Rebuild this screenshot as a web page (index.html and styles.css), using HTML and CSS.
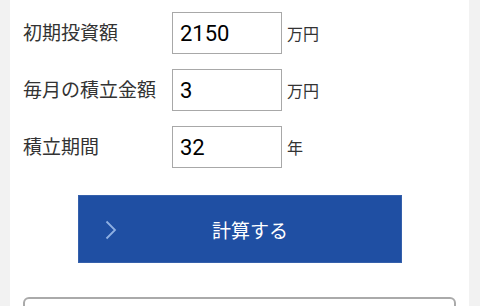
FILE: index.html
```html
<!DOCTYPE html>
<html lang="ja">
<head>
  <meta charset="UTF-8">
  <title>積立シミュレーション</title>
  <meta name="viewport" content="width=device-width, initial-scale=1.0">
  <link rel="stylesheet" href="styles.css">
</head>
<body>
  <div class="panel">
    <div class="form-row">
      <label class="label" for="initial">初期投資額</label>
      <input class="num-input" id="initial" type="text" value="2150">
      <span class="unit">万円</span>
    </div>
    <div class="form-row">
      <label class="label" for="monthly">毎月の積立金額</label>
      <input class="num-input" id="monthly" type="text" value="3">
      <span class="unit">万円</span>
    </div>
    <div class="form-row">
      <label class="label" for="years">積立期間</label>
      <input class="num-input" id="years" type="text" value="32">
      <span class="unit">年</span>
    </div>
    <button class="calc-btn">
      <svg class="chevron" width="12" height="20" viewBox="0 0 12 20">
        <polyline points="1.5,1.5 10,10 1.5,18.5" fill="none" stroke="#8fb0e2" stroke-width="1.8"/>
      </svg>
      計算する
    </button>
    <div class="result-box"></div>
  </div>
</body>
</html>
```

FILE: styles.css
```css
body {
  margin: 0;
  background: #f2f2f2;
  font-family: Roboto, "Noto Sans CJK JP", sans-serif;
  color: #333;
}
.panel {
  margin: 0 11px 0 10px;
  background: #fff;
  padding: 12px 13px 0 13px;
  height: 306px;
  box-sizing: border-box;
  overflow: hidden;
}
.form-row {
  display: flex;
  align-items: center;
  margin-bottom: 15px;
}
.label {
  width: 149px;
  font-size: 19px;
  color: #333;
  margin-top: -3px;
}
.num-input {
  width: 110px;
  height: 42px;
  box-sizing: border-box;
  border: 1.5px solid #a8a8a8;
  border-radius: 0;
  padding: 0 7px;
  font-family: Roboto, sans-serif;
  font-size: 22px;
  color: #000;
  outline: none;
}
.unit {
  margin-left: 5px;
  font-size: 16px;
  color: #333;
}
.calc-btn {
  display: block;
  position: relative;
  width: 324px;
  height: 68px;
  margin: 27px auto 0 auto;
  background: #1f4fa3;
  border: 1px solid #3560ab;
  color: #fff;
  font-family: "Noto Sans CJK JP", sans-serif;
  font-size: 19px;
  padding-left: 27px;
  cursor: pointer;
}
.chevron {
  position: absolute;
  left: 26px;
  top: 24px;
}
.result-box {
  margin-top: 34px;
  height: 40px;
  border: 2px solid #aaa;
  border-radius: 6px;
}
```
